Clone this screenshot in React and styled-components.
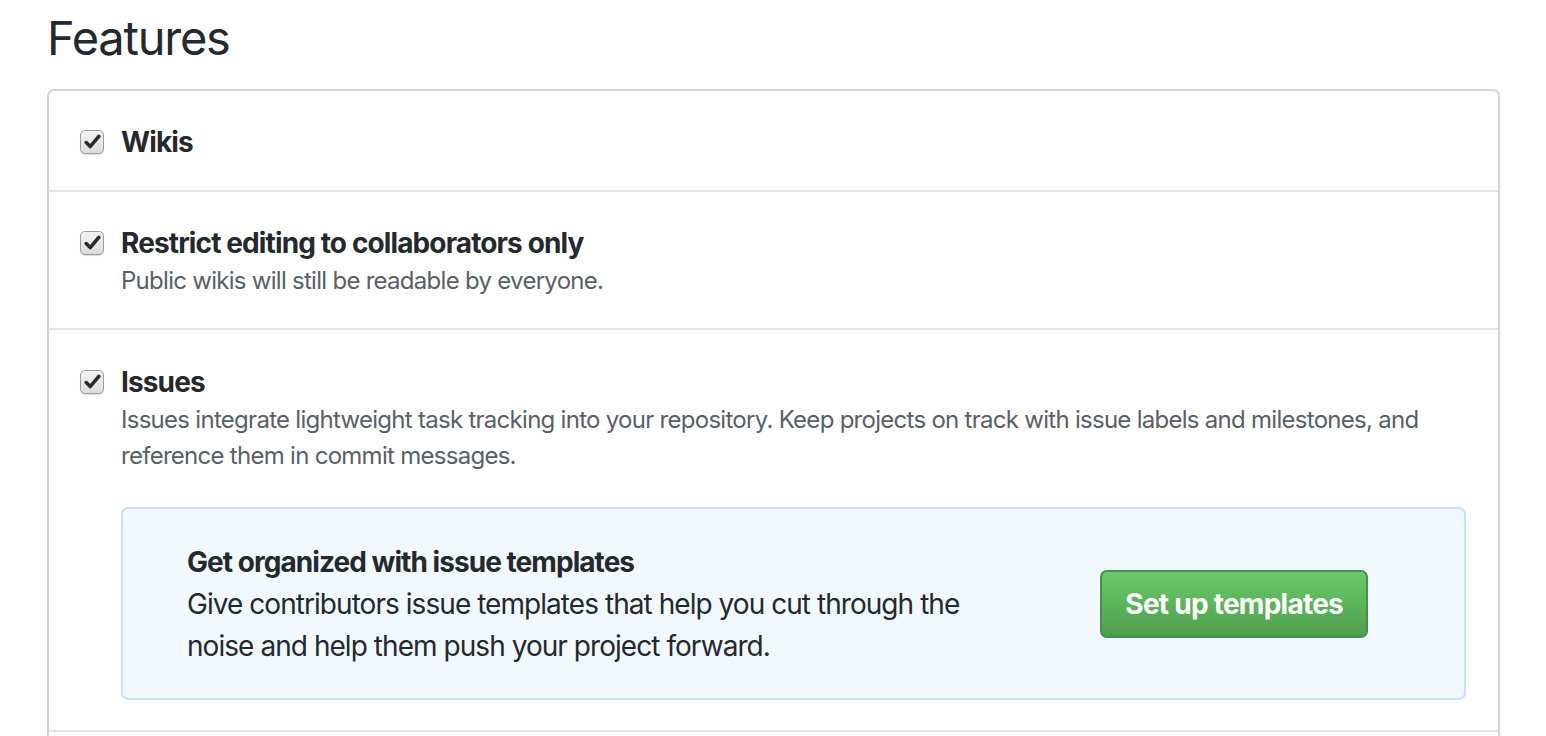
import React from "react";
import styled, { createGlobalStyle } from "styled-components";

const GlobalStyle = createGlobalStyle`
  html, body {
    margin: 0;
    padding: 0;
    background: #fff;
    overflow: hidden;
  }
  body {
    font-family: Inter, "Liberation Sans", sans-serif;
    color: #24292e;
  }
`;

const features = [
  {
    id: "wikis",
    label: "Wikis"
  },
  {
    id: "restrict",
    label: "Restrict editing to collaborators only",
    note: "Public wikis will still be readable by everyone."
  },
  {
    id: "issues",
    label: "Issues",
    note:
      "Issues integrate lightweight task tracking into your repository. Keep projects on track with issue labels and milestones, and reference them in commit messages.",
    templates: true
  }
];

const Check = () => (
  <CheckBox>
    <svg width="17" height="16" viewBox="0 0 17 16">
      <path
        d="M2.2 8.6 L6.2 12.6 L14.8 2.4"
        fill="none"
        stroke="#2b2b2b"
        strokeWidth="3.6"
        strokeLinecap="round"
        strokeLinejoin="round"
      />
    </svg>
  </CheckBox>
);

const App = () => {
  return (
    <Page>
      <GlobalStyle />
      <Heading>Features</Heading>
      <Box>
        {features.map(f => (
          <Row key={f.id}>
            <Check />
            <Body>
              <Label>{f.label}</Label>
              {f.note && <Note>{f.note}</Note>}
              {f.templates && (
                <Flash>
                  <FlashText>
                    <FlashTitle>Get organized with issue templates</FlashTitle>
                    Give contributors issue templates that help you cut through the
                    noise and help them push your project forward.
                  </FlashText>
                  <GreenButton>Set up templates</GreenButton>
                </Flash>
              )}
            </Body>
          </Row>
        ))}
      </Box>
    </Page>
  );
};

export default App;

const Page = styled.div`
  padding: 8px 46px 0 47px;
`;

const Heading = styled.h2`
  margin: 0 0 21px;
  font-size: 47px;
  line-height: 60px;
  font-weight: 400;
  letter-spacing: -1.22px;
  color: #24292e;
`;

const Box = styled.div`
  border: 2px solid #d1d5da;
  border-radius: 7px;
  padding-bottom: 40px;
`;

const Row = styled.div`
  display: flex;
  align-items: flex-start;
  padding: 31px 32px 29px 31px;
  border-top: 2px solid #e1e4e8;

  &:first-child {
    border-top: 0;
    padding-bottom: 28px;
  }

  &:last-child {
    padding-top: 32px;
    padding-bottom: 30px;
    border-bottom: 2px solid #e1e4e8;
  }
`;

const CheckBox = styled.span`
  flex: none;
  width: 24px;
  height: 24px;
  margin: 8px 17px 0 0;
  box-sizing: border-box;
  border: 1.5px solid #9c9c9c;
  border-radius: 5px;
  background: linear-gradient(#f3f3f3, #dcdcdc);
  box-shadow: 0 1px 1px rgba(0, 0, 0, 0.15);
  display: flex;
  align-items: center;
  justify-content: center;
`;

const Body = styled.div`
  flex: 1;
  min-width: 0;
`;

const Label = styled.div`
  font-size: 28px;
  line-height: 40px;
  font-weight: 700;
  letter-spacing: -0.88px;
  color: #24292e;
`;

const Note = styled.p`
  margin: 0;
  font-size: 24px;
  line-height: 36px;
  letter-spacing: -0.72px;
  color: #586069;
`;

const Flash = styled.div`
  display: flex;
  align-items: center;
  margin-top: 33px;
  padding: 32px 96px 31px 64px;
  background: #f1f8ff;
  border: 2px solid #c8e1ff;
  border-radius: 7px;
`;

const FlashText = styled.div`
  max-width: 790px;
  font-size: 28px;
  line-height: 42px;
  letter-spacing: -0.95px;
  color: #24292e;
`;

const FlashTitle = styled.div`
  font-weight: 700;
`;

const GreenButton = styled.button`
  margin-left: auto;
  height: 68px;
  padding: 0 23px;
  font-family: inherit;
  letter-spacing: -0.75px;
  font-size: 28px;
  font-weight: 700;
  color: #fff;
  background: linear-gradient(#6ac96a, #4e9e4e);
  border: 2px solid #44914a;
  border-radius: 7px;
  cursor: pointer;
`;
